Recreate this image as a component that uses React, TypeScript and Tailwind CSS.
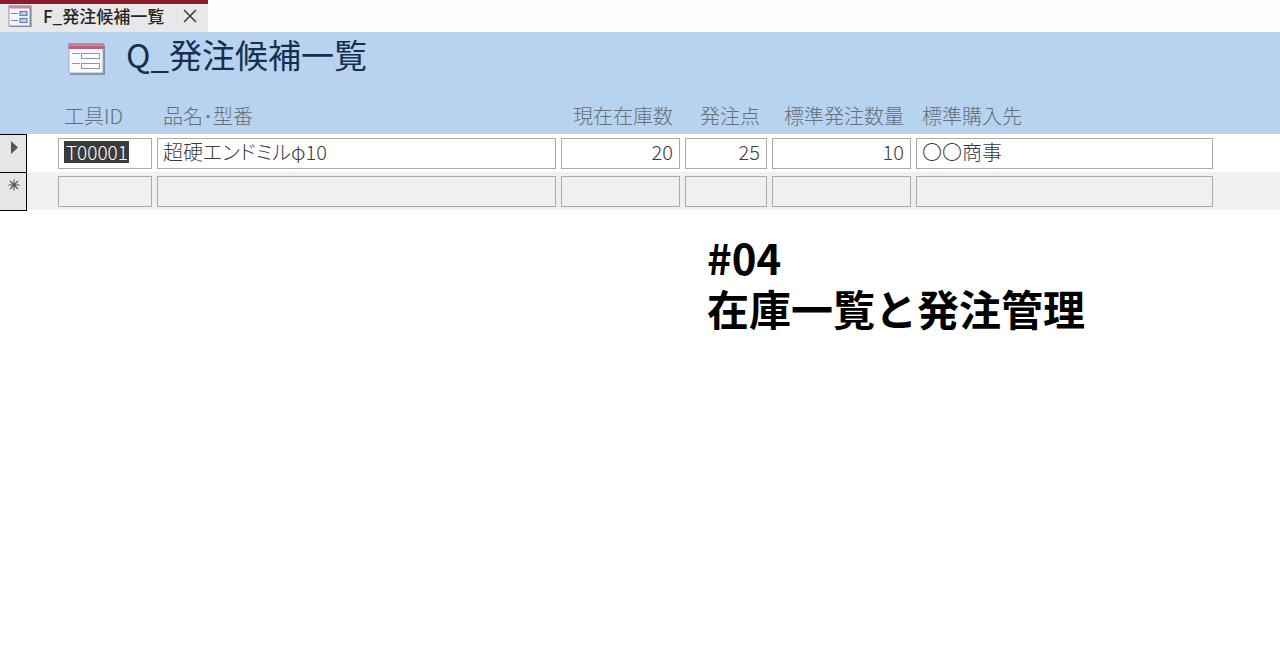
import React from "react";

type Align = "left" | "right";

interface Column {
  key: string;
  label: string;
  width: string;
  align: Align;
}

const columns: Column[] = [
  { key: "id", label: "工具ID", width: "w-[99px]", align: "left" },
  { key: "name", label: "品名･型番", width: "w-[404px]", align: "left" },
  { key: "stock", label: "現在在庫数", width: "w-[124px]", align: "right" },
  { key: "point", label: "発注点", width: "w-[87px]", align: "right" },
  { key: "quantity", label: "標準発注数量", width: "w-[144px]", align: "right" },
  { key: "supplier", label: "標準購入先", width: "w-[302px]", align: "left" },
];

const record: Record<string, string> = {
  id: "T00001",
  name: "超硬エンドミルφ10",
  stock: "20",
  point: "25",
  quantity: "10",
  supplier: "〇〇商事",
};

function TabIcon() {
  return (
    <svg width="24" height="23" viewBox="0 0 24 23" aria-hidden="true">
      <rect x="1.5" y="1" width="22" height="21" fill="#6f7896" />
      <rect x="1" y="1" width="21" height="20" fill="#f5f8fd" stroke="#8b93b5" />
      <rect x="1" y="0.5" width="22" height="3" fill="#c98a9e" />
      <path d="M3 8.500h7M3 15.500h7" stroke="#7d8aa8" strokeWidth="1.2" />
      <rect x="12" y="6.5" width="7" height="4" fill="#b9cff0" stroke="#6580b4" strokeWidth="1.2" />
      <rect x="12" y="13.5" width="7" height="4" fill="#b9cff0" stroke="#6580b4" strokeWidth="1.2" />
    </svg>
  );
}

function FormIcon() {
  return (
    <svg width="38" height="34" viewBox="0 0 38 34" aria-hidden="true">
      <rect x="2" y="2" width="35" height="30" fill="#6d7a92" opacity="0.75" />
      <rect x="1" y="1" width="34" height="29" fill="#fafbfe" stroke="#a3abc2" />
      <rect x="0.5" y="0.5" width="35" height="5.5" fill="#b9607c" />
      <rect x="1.5" y="1.5" width="33" height="1.5" fill="#cf8ba0" />
      <path d="M4 10.500h8M4 20.500h8" stroke="#8b97ad" />
      <rect x="13.5" y="10.5" width="18" height="5" fill="#ffffff" stroke="#8b97ad" />
      <rect x="13.5" y="20.5" width="18" height="5" fill="#ffffff" stroke="#8b97ad" />
    </svg>
  );
}

function Field({ column, value, row }: { column: Column; value: string; row: number }) {
  const selected = row === 0 && column.key === "id";
  return (
    <div
      className={`mr-[5px] flex h-[31px] items-start border border-[#ababab] pt-0.5 ${
        column.align === "right" ? "px-1.5" : "px-[5px]"
      } ${row === 0 ? "bg-white" : "bg-[#f0f0f0]"}`}
    >
      <input
        aria-label={`${column.label} ${row + 1}`}
        defaultValue={value}
        className={`h-[22px] min-w-0 font-light leading-[22px] outline-none [font-feature-settings:'palt'] ${
          selected ? "w-[65px] bg-[#3b3b3b] pl-0.5 text-[19px] text-white" : "w-full bg-transparent text-[20px] text-[#3c3c3c]"
        } ${column.align === "right" ? "text-right" : "text-left"}`}
      />
    </div>
  );
}

export default function App() {
  return (
    <div className="min-h-screen bg-white font-['Noto_Sans_CJK_JP',sans-serif] text-[#3c3c3c]">
      <nav className="flex h-8 bg-[#fcfcfc]">
        <div className="flex h-8 w-52 items-center border-t-4 border-[#8d1c2c] bg-[#e8e8e8] pb-1 pl-2">
          <TabIcon />
          <a href="#form" className="ml-[11px] text-[17px] font-medium leading-6 text-[#262626]">
            F_発注候補一覧
          </a>
          <button type="button" aria-label="閉じる" className="ml-3.5 flex size-6 items-center justify-center">
            <svg width="14" height="14" viewBox="0 0 14 14" aria-hidden="true">
              <path d="M1 1l12 12M13 1L1 13" stroke="#3f3f3f" strokeWidth="1.6" />
            </svg>
          </button>
        </div>
      </nav>

      <main id="form">
        <header className="flex h-[66px] items-start bg-[#b8d3f0] pl-[68px]">
          <div className="pt-[11px]">
            <FormIcon />
          </div>
          <h1 className="ml-5 text-[33px] leading-[45px] text-[#15304f]">Q_発注候補一覧</h1>
        </header>

        <table className="w-full table-fixed border-collapse">
          <thead className="bg-[#b8d3f0]">
            <tr className="h-9">
              <td className="w-[26px]" />
              <td className="w-8" />
              {columns.map((c) => (
                <th
                  key={c.key}
                  scope="col"
                  className={`${c.width} whitespace-nowrap p-0 align-top text-[20px] font-light leading-9 text-[#666e79] ${
                    c.align === "right" ? "pr-3 text-right" : "pl-1.5 text-left"
                  }`}
                >
                  {c.label}
                </th>
              ))}
              <td />
            </tr>
          </thead>
          <tbody>
            {[0, 1].map((row) => (
              <tr key={row} className={row === 0 ? "h-[38px] bg-white" : "h-[38px] bg-[#f0f0f0]"}>
                <td className="border border-l-0 border-black bg-[#e6e6e6] p-0 align-top">
                  <svg width="26" height="34" viewBox="0 0 26 34" aria-hidden="true">
                    {row === 0 ? (
                      <path d="M11 6v13l7-6.500z" fill="#555555" />
                    ) : (
                      <path d="M14 6.500v11M8.500 12h11M10 8l8 8M18 8l-8 8" stroke="#555555" strokeWidth="1.1" />
                    )}
                  </svg>
                </td>
                <td />
                {columns.map((c) => (
                  <td key={c.key} className="p-0">
                    <Field column={c} value={row === 0 ? record[c.key] : ""} row={row} />
                  </td>
                ))}
                <td />
              </tr>
            ))}
          </tbody>
        </table>

        <h2 className="ml-[707px] mt-5 text-[42px] font-bold leading-[51px] text-black">
          #04
          <br />
          在庫一覧と発注管理
        </h2>
      </main>
    </div>
  );
}
